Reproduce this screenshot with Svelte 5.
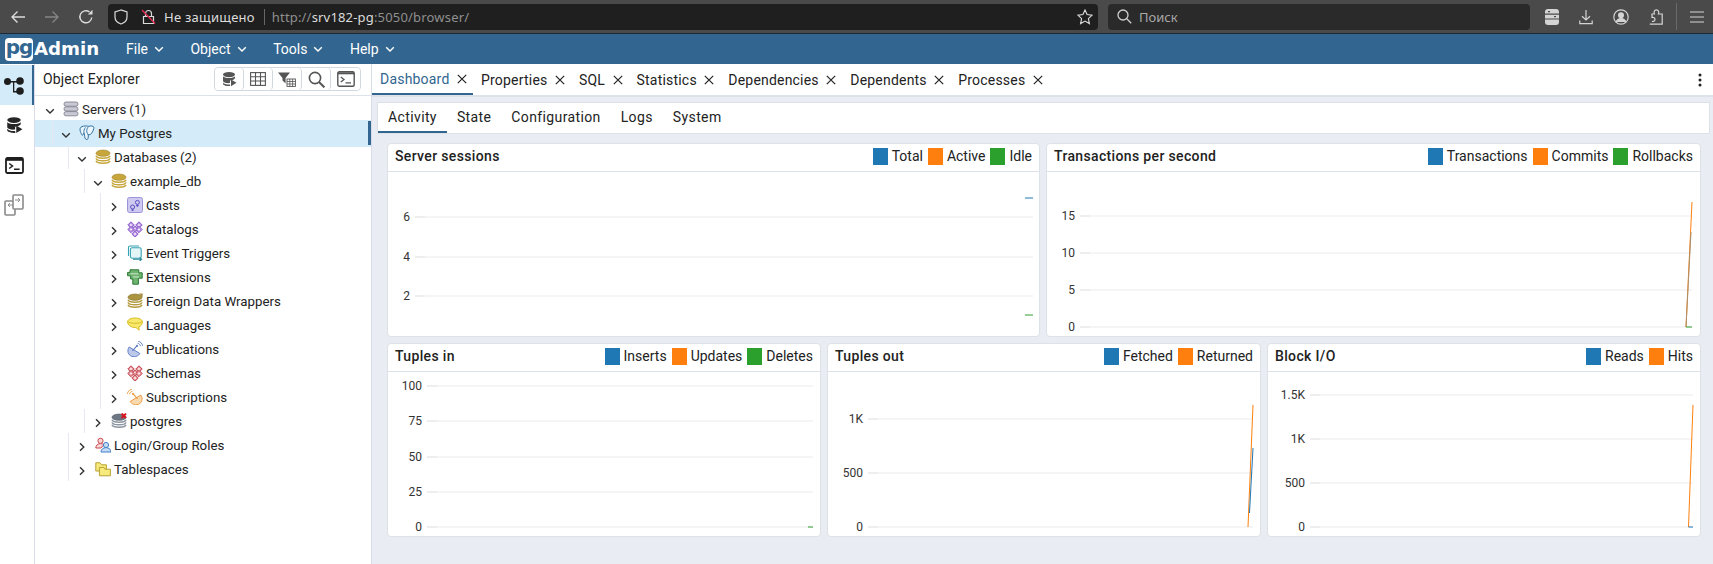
<script>
  const menus = ['File', 'Object', 'Tools', 'Help'];
  const tabs = ['Dashboard', 'Properties', 'SQL', 'Statistics', 'Dependencies', 'Dependents', 'Processes'];
  const subTabs = ['Activity', 'State', 'Configuration', 'Logs', 'System'];

  const tree = [
    { depth: 0, icon: 'servers', label: 'Servers', count: '(1)', open: true },
    { depth: 1, icon: 'elephant', label: 'My Postgres', open: true, selected: true },
    { depth: 2, icon: 'db', label: 'Databases', count: '(2)', open: true },
    { depth: 3, icon: 'db', label: 'example_db', open: true },
    { depth: 4, icon: 'casts', label: 'Casts' },
    { depth: 4, icon: 'catalogs', label: 'Catalogs' },
    { depth: 4, icon: 'triggers', label: 'Event Triggers' },
    { depth: 4, icon: 'extensions', label: 'Extensions' },
    { depth: 4, icon: 'fdw', label: 'Foreign Data Wrappers' },
    { depth: 4, icon: 'languages', label: 'Languages' },
    { depth: 4, icon: 'publications', label: 'Publications' },
    { depth: 4, icon: 'schemas', label: 'Schemas' },
    { depth: 4, icon: 'subscriptions', label: 'Subscriptions' },
    { depth: 3, icon: 'dboff', label: 'postgres' },
    { depth: 2, icon: 'roles', label: 'Login/Group Roles' },
    { depth: 2, icon: 'tablespaces', label: 'Tablespaces' }
  ];

  const BLUE = '#1f77b4';
  const ORANGE = '#ff7f0e';
  const GREEN = '#2ca02c';

  const rowOne = [
    {
      title: 'Server sessions',
      legend: [['Total', BLUE], ['Active', ORANGE], ['Idle', GREEN]],
      ticks: [['6', 45], ['4', 85], ['2', 124]],
      left: 27, right: 645,
      lines: [
        { color: BLUE, d: 'M637 26H645' },
        { color: GREEN, d: 'M637 143H645' }
      ]
    },
    {
      title: 'Transactions per second',
      legend: [['Transactions', BLUE], ['Commits', ORANGE], ['Rollbacks', GREEN]],
      ticks: [['15', 44], ['10', 81], ['5', 118], ['0', 155]],
      left: 33, right: 645,
      lines: [
        { color: ORANGE, d: 'M639 155L645 30' },
        { color: '#a8906e', d: 'M639 155L644 60' },
        { color: GREEN, d: 'M639 155H645' }
      ]
    }
  ];

  const rowTwo = [
    {
      title: 'Tuples in',
      legend: [['Inserts', BLUE], ['Updates', ORANGE], ['Deletes', GREEN]],
      ticks: [['100', 14], ['75', 49], ['50', 85], ['25', 120], ['0', 155]],
      left: 39, right: 425,
      lines: [{ color: GREEN, d: 'M420 155H425' }]
    },
    {
      title: 'Tuples out',
      legend: [['Fetched', BLUE], ['Returned', ORANGE]],
      ticks: [['1K', 47], ['500', 101], ['0', 155]],
      left: 40, right: 425,
      lines: [
        { color: ORANGE, d: 'M420 155L425 33' },
        { color: BLUE, d: 'M421.500 141L425 76' }
      ]
    },
    {
      title: 'Block I/O',
      legend: [['Reads', BLUE], ['Hits', ORANGE]],
      ticks: [['1.5K', 23], ['1K', 67], ['500', 111], ['0', 155]],
      left: 42, right: 425,
      lines: [
        { color: ORANGE, d: 'M420.5 155L425 33' },
        { color: BLUE, d: 'M420.5 155H425' }
      ]
    }
  ];
</script>

{#snippet chevron(open, cls)}
  <svg class={cls} width="12" height="12" viewBox="0 0 12 12" fill="none" stroke="currentColor" stroke-width="1.4">
    {#if open}
      <path d="M2.2 4.2 6 8l3.8-3.8" />
    {:else}
      <path d="M4 2.2 7.8 6 4 9.8" />
    {/if}
  </svg>
{/snippet}

{#snippet closeIcon()}
  <svg class="tab-x" width="10" height="10" viewBox="0 0 10 10" stroke="#222" stroke-width="1.2"><path d="M.8.8l8.4 8.4M9.2.8.8 9.2" /></svg>
{/snippet}

{#snippet dbStack(top, band, line)}
  <ellipse cx="8" cy="4.2" rx="7" ry="3.1" fill={top} stroke={line} stroke-width=".7" />
  <path d="M1 6.800c1 3.200 13 3.200 14 0M1 9.400c1 3.200 13 3.200 14 0M1 11.800c1 3.200 13 3.200 14 0" fill="none" stroke={band} stroke-width="1.500" />
{/snippet}

{#snippet lattice(fill, line)}
  {#each [[4, 4], [12, 4], [8, 8], [4, 8.5], [12, 8.5], [8, 13]] as [x, y]}
    <path d="M{x} {y - 3.2}l3.2 3.2-3.2 3.2-3.2-3.2z" fill={fill} stroke={line} stroke-width="1" />
    <rect x={x - 0.8} y={y - 0.8} width="1.6" height="1.6" fill="#fff" />
  {/each}
{/snippet}

{#snippet dish(fill, line, flip)}
  <g transform={flip ? 'translate(16 0) scale(-1 1)' : ''}>
    <path d="M2.200 6c-2.600 3.800-1 8 2.400 9.300 3.600 1.200 7-.4 8.200-2.800z" fill={fill} stroke={line} stroke-width="1" />
    <path d="M5.500 9.800 9.600 5.200" stroke={line} stroke-width="1.100" />
    <circle cx="10" cy="4.900" r="1.100" fill={line} />
    <path d="M10.600 2.300c1.400.2 2.600 1.300 2.900 2.900M11.200.4c2.300.2 4.100 2 4.400 4.500" fill="none" stroke={line} stroke-width=".9" />
  </g>
{/snippet}

{#snippet treeIcon(name)}
  <svg class="node-icon" width="16" height="16" viewBox="0 0 16 16">
    {#if name === 'servers'}
      {#each [1, 5.8, 10.6] as y}
        <rect x="1" {y} width="14" height="4.200" rx="2" fill="#c9c9d6" stroke="#84848f" stroke-width=".9" />
      {/each}
    {:else if name === 'elephant'}
      <path d="M3 1.600C1 2.200.6 4.600 1.400 6.600c.6 1.600 1.200 3 1.600 3.400.8.6 1.400-.8 2-2 .4.8.6 3.200 1 5 .4 1.400 1.600 2 2.600 1.200.8-.8.6-3 .8-4.600 1 .2 2.200 0 3-1 1.400-1.800 2.800-5 2.400-6.400C14.400 .8 11.600 .6 9.800 1.400 8.200 .8 4.600 .8 3 1.600z" fill="#eaf5fc" stroke="#2f6f9f" stroke-width="1" />
      <path d="M9.800 1.400c-1.400 1-2.400 3.400-2 5.600.2 1.400 1.400 1.800 1.400 3.200M5 8c-.4-2 .2-4 1.400-5.600" fill="none" stroke="#2f6f9f" stroke-width=".9" />
    {:else if name === 'db'}
      {@render dbStack('#c7a63c', '#c7a63c', '#a98c30')}
    {:else if name === 'fdw'}
      {@render dbStack('#ac9540', '#b59c42', '#8d7a30')}
      <path d="M12 .4h3.600V4z" fill="#a8893a" />
    {:else if name === 'dboff'}
      {@render dbStack('#6e7784', '#8c95a0', '#5a626d')}
      <path d="M10.600 .6l4.400 4.400M15 .6l-4.400 4.400" stroke="#d8161e" stroke-width="2" />
    {:else if name === 'casts'}
      <rect x=".5" y=".5" width="15" height="15" rx="2" fill="#cdc9f1" stroke="#9a93d8" stroke-width="1" />
      <circle cx="10.400" cy="5.400" r="2" fill="none" stroke="#5a4fc0" stroke-width="1" />
      <circle cx="5.600" cy="10" r="2" fill="none" stroke="#5a4fc0" stroke-width="1" />
      <path d="M10.400 7.400v2.600M5.600 12v2M9 8.600h2.800M4.400 13h2.400" stroke="#5a4fc0" stroke-width=".9" />
    {:else if name === 'catalogs'}
      {@render lattice('#b893e4', '#8e5fcb')}
    {:else if name === 'schemas'}
      {@render lattice('#e69aa0', '#c2444f')}
    {:else if name === 'triggers'}
      <path d="M1.500 11V2.800C1.500 1.600 2 1 3.200 1H12" fill="none" stroke="#37a3b4" stroke-width="1.100" />
      <rect x="3.400" y="2.800" width="10.800" height="10.400" rx="1.600" fill="#e3f5f7" stroke="#37a3b4" stroke-width="1.100" />
      <path d="M6 14.200h8.400M12.600 12.400l2 1.800-2 1.800" fill="none" stroke="#2d8797" stroke-width="1.100" />
    {:else if name === 'extensions'}
      <path d="M3 .8h8.800v3h3.400v5.400H11.400v6H5.800V10H3.600V6.800H.6V3.400H3z" fill="#6eb36f" stroke="#2c7a35" stroke-width="1" />
      <path d="M3.400 4.800h8M6 8h6" stroke="#cfe8cf" stroke-width="1" />
    {:else if name === 'languages'}
      <path d="M.6 5c0-2.600 3.400-4 7.400-4s7.400 1.400 7.400 4c0 2.400-1.600 4.200-3.600 4.800l.4 3.400-3.200-2.600C4 10.800.6 7.800.6 5z" fill="#f7e96b" stroke="#d9bd2a" stroke-width="1" />
      <path d="M1 4.800c2.400 2 11.400 2 14 0" fill="none" stroke="#d9bd2a" stroke-width="1" />
    {:else if name === 'publications'}
      {@render dish('#bcc9ea', '#5f7cc4', false)}
    {:else if name === 'subscriptions'}
      {@render dish('#fbd9ae', '#ee9a3e', true)}
    {:else if name === 'roles'}
      <circle cx="5.500" cy="3.800" r="2.600" fill="#f8d7d8" stroke="#c9474f" stroke-width="1" />
      <path d="M.8 11c0-2.600 2-4.400 4.700-4.400 1.400 0 2.400.4 3.200 1.200L6 11z" fill="#f8d7d8" stroke="#c9474f" stroke-width="1" />
      <circle cx="11" cy="8" r="2.600" fill="#c6dcf5" stroke="#3f7fc7" stroke-width="1" />
      <path d="M6 15c0-2.600 2.200-4.400 5-4.400s5 1.800 5 4.400z" fill="#c6dcf5" stroke="#3f7fc7" stroke-width="1" />
    {:else if name === 'tablespaces'}
      <path d="M.8 1.800V10h10.600V3.800H6.600L5 1.800z" fill="#f6ea7d" stroke="#b9a232" stroke-width="1" />
      <path d="M4.400 6.400v8.400h11V8.200H10L8.800 6.400z" fill="#f6ea7d" stroke="#b9a232" stroke-width="1" />
    {/if}
  </svg>
{/snippet}

{#snippet toolDb(color)}
  <ellipse cx="8" cy="3.600" rx="6" ry="2.600" fill={color} />
  <path d="M2 5.300c1 2.400 11 2.400 12 0v2c-1 1.600-3 2-5 2.200v2.600c-3 .4-6-.2-7-1.800zM2 11.400c1 1.500 4 2.200 7 2l.2 1.600c-3 .2-6-.4-7.200-1.800z" fill={color} />
  <path d="M10 8.400l5.500 3.400L10 15.200z" fill={color} />
{/snippet}

{#snippet chart(c)}
  <section class="card">
    <header class="card-head">
      <h3>{c.title}</h3>
      <ul class="legend">
        {#each c.legend as [name, color]}
          <li><i style="background:{color}"></i>{name}</li>
        {/each}
      </ul>
    </header>
    <svg class="plot" width="100%" height="164">
      {#each c.ticks as [label, y]}
        <path class="tick" d="M{c.left} {y}h10" />
        <path class="grid" d="M{c.left + 10} {y}H{c.right}" />
        <text x={c.left - 5} y={y + 4} text-anchor="end">{label}</text>
      {/each}
      {#each c.lines as l}
        <path d={l.d} fill="none" stroke={l.color} stroke-width="1" />
      {/each}
    </svg>
  </section>
{/snippet}

<div class="app">
  <div class="browser">
    <svg class="nav-btn" width="16" height="16" viewBox="0 0 16 16" fill="none" stroke="#dcdcdc" stroke-width="1.4"><path d="M15 8H2M7.500 2.500 2 8l5.500 5.500" /></svg>
    <svg class="nav-btn" width="16" height="16" viewBox="0 0 16 16" fill="none" stroke="#858585" stroke-width="1.4"><path d="M1 8h13M8.500 2.500 14 8l-5.500 5.500" /></svg>
    <svg class="nav-btn" width="16" height="16" viewBox="0 0 16 16" fill="none" stroke="#dcdcdc" stroke-width="1.400"><path d="M13.800 8.500A6 6 0 1 1 11.500 3" /><path d="M14.500 .8v4.700H9.800z" fill="#dcdcdc" stroke="none" /></svg>

    <div class="urlbar">
      <svg width="14" height="16" viewBox="0 0 14 16" fill="none" stroke="#dcdcdc" stroke-width="1.200"><path d="M7 1 1 3v5c0 3.500 3 6 6 7 3-1 6-3.500 6-7V3z" /></svg>
      <svg class="lock" width="15" height="16" viewBox="0 0 15 16" fill="none"><path d="M4.500 7V4.500a3 3 0 0 1 6 0V7M2.500 7.500h10v7h-10z" stroke="#dcdcdc" stroke-width="1.200" /><path d="M1 1l13 13.500" stroke="#e22850" stroke-width="1.400" /></svg>
      <span class="insecure">Не защищено</span>
      <span class="sep"></span>
      <span class="url">http://<b>srv182-pg</b>:5050/browser/</span>
      <svg class="star" width="16" height="16" viewBox="0 0 16 16" fill="none" stroke="#dcdcdc" stroke-width="1.100"><path d="M8 1l2.100 4.600 5 .6-3.700 3.400 1 5L8 12.100l-4.400 2.500 1-5L.9 6.200l5-.6z" /></svg>
    </div>

    <div class="search">
      <svg width="15" height="15" viewBox="0 0 15 15" fill="none" stroke="#cfcfcf" stroke-width="1.300"><circle cx="6" cy="6" r="5" /><path d="M9.800 9.800 14.200 14.200" /></svg>
      <span>Поиск</span>
    </div>

    <div class="browser-tools">
      <svg width="14" height="16" viewBox="0 0 14 16"><rect width="14" height="16" rx="3" fill="#d4d4d4" /><path d="M0 5.200h14M0 10h14" stroke="#4a4a4a" stroke-width="1.200" /><path d="M3 2.600h2M9 7.600h2" stroke="#4a4a4a" stroke-width="1.400" /></svg>
      <svg width="14" height="16" viewBox="0 0 14 16" fill="none" stroke="#d4d4d4" stroke-width="1.200"><path d="M7 1v10M3 7.200 7 11l4-3.800M.8 11.500v3.200h12.400v-3.200" /></svg>
      <svg width="16" height="16" viewBox="0 0 16 16" fill="none" stroke="#d4d4d4" stroke-width="1.200"><circle cx="8" cy="8" r="7.200" /><circle cx="8" cy="6.200" r="2.400" fill="#d4d4d4" /><path d="M3.200 13c.8-2.400 2.600-3.400 4.800-3.400s4 1 4.800 3.400" fill="#d4d4d4" /></svg>
      <svg width="14" height="16" viewBox="0 0 14 16" fill="none" stroke="#d4d4d4" stroke-width="1.200"><path d="M.8 15.200h12.400V5H9.400c.8-1.600.2-4.200-2-4.200S4.600 3.400 5.400 5H3v3.400c1.800-.4 3 .6 3 2s-1.400 2.400-3 2" /></svg>
      <span class="tool-sep"></span>
      <svg width="14" height="12" viewBox="0 0 14 12" stroke="#d4d4d4" stroke-width="1.200"><path d="M0 1h14M0 6h14M0 11h14" /></svg>
    </div>
  </div>

  <nav class="menubar">
    <div class="logo"><span class="pg">pg</span><span class="admin">Admin</span></div>
    {#each menus as m}
      <span class="menu">{m}{@render chevron(true, 'menu-chev')}</span>
    {/each}
  </nav>

  <main class="main">
    <aside class="rail">
      <div class="rail-btn active">
        <svg width="20" height="19" viewBox="0 0 20 19" fill="#1e1e1e"><circle cx="3.500" cy="5.500" r="3.500" /><circle cx="16" cy="5" r="3.800" /><circle cx="16" cy="15" r="3.800" /><path d="M3 5h12v1.400H10.300V15H15v1.400H9V6.400H3z" /></svg>
      </div>
      <div class="rail-btn">
        <svg width="18" height="18" viewBox="0 0 16 16">{@render toolDb('#262626')}</svg>
      </div>
      <div class="rail-btn">
        <svg width="19" height="17" viewBox="0 0 19 17" fill="none"><rect x="1" y="1" width="17" height="15" rx="1.500" stroke="#1e1e1e" stroke-width="1.800" /><path d="M1 2.500h17" stroke="#1e1e1e" stroke-width="2.600" /><path d="M4.200 6.500 7.500 9l-3.300 2.500M9 12.300h5.600" stroke="#1e1e1e" stroke-width="1.500" /></svg>
      </div>
      <div class="rail-btn">
        <svg width="20" height="22" viewBox="0 0 20 22" fill="#fff" stroke="#8a8a8a" stroke-width="1.600"><rect x="1" y="7" width="10" height="14" rx="1" /><rect x="9" y="1" width="10" height="14" rx="1" /><path d="M9 11H4.500M6 9l-2 2 2 2M11 6h5M14 4l2 2-2 2" stroke-width="1" fill="none" /></svg>
      </div>
    </aside>

    <section class="explorer">
      <header class="explorer-head">
        <span>Object Explorer</span>
        <div class="toolbar">
          <button aria-label="Query tool">
            <svg width="16" height="16" viewBox="0 0 16 16">{@render toolDb('#555')}</svg>
          </button>
          <button aria-label="View data">
            <svg width="16" height="14" viewBox="0 0 16 14" fill="none" stroke="#555" stroke-width="1.100"><rect x=".6" y=".6" width="14.800" height="12.800" /><path d="M.6 4.800h14.800M.6 9h14.800M5.500.6v12.800M10.500.6v12.800" /></svg>
          </button>
          <button aria-label="Filtered rows">
            <svg width="18" height="15" viewBox="0 0 18 15"><path d="M0 .5h12L7.600 6v5.500L4.500 8.500V6z" fill="#555" /><rect x="9" y="7" width="8.400" height="7.400" fill="#fff" stroke="#555" stroke-width=".9" /><path d="M9 9.500h8.400M9 12h8.400M11.800 7v7.400M14.600 7v7.400" stroke="#555" stroke-width=".8" /></svg>
          </button>
          <button aria-label="Search">
            <svg width="17" height="17" viewBox="0 0 17 17" fill="none" stroke="#555" stroke-width="1.600"><circle cx="7" cy="7" r="5.600" /><path d="M11 11l5.400 5.400" stroke-width="2" /></svg>
          </button>
          <button aria-label="PSQL">
            <svg width="18" height="16" viewBox="0 0 18 16" fill="none" stroke="#555"><rect x=".8" y=".8" width="16.400" height="14.400" rx="1.500" stroke-width="1.400" /><path d="M.8 2.300h16.400" stroke-width="2" /><path d="M3.800 6 7 8.500 3.800 11M8.500 11.800h5.500" stroke-width="1.300" /></svg>
          </button>
        </div>
      </header>

      <div class="tree">
        {#each tree as n}
          <div class="row" class:selected={n.selected}>
            <span class="guide" class:hidden={n.depth === 0} style="width:{16 * n.depth}px"></span>
            <span class="twisty">{@render chevron(n.open, '')}</span>
            {@render treeIcon(n.icon)}
            <span class="label">{n.label}{#if n.count}<span class="count">{n.count}</span>{/if}</span>
          </div>
        {/each}
      </div>
    </section>

    <section class="dash">
      <div class="tabbar">
        {#each tabs as t, i}
          <div class="tab" class:on={i === 0}>{t}{@render closeIcon()}</div>
        {/each}
        <svg class="more" width="4" height="14" viewBox="0 0 4 14" fill="#222"><circle cx="2" cy="2" r="1.500" /><circle cx="2" cy="7" r="1.500" /><circle cx="2" cy="12" r="1.500" /></svg>
      </div>

      <div class="dash-body">
        <div class="subtabs">
          {#each subTabs as t, i}
            <div class="subtab" class:on={i === 0}>{t}</div>
          {/each}
        </div>
        <div class="charts">
          <div class="chart-row two">
            {#each rowOne as c}{@render chart(c)}{/each}
          </div>
          <div class="chart-row three">
            {#each rowTwo as c}{@render chart(c)}{/each}
          </div>
        </div>
      </div>
    </section>
  </main>
</div>

<style>
  :global(body) {
    margin: 0;
    background: #fff;
  }

  .app {
    width: 1713px;
    height: 564px;
    overflow: hidden;
    display: flex;
    flex-direction: column;
    font-family: Roboto, "Liberation Sans", sans-serif;
    font-size: 14px;
    color: #222;
  }

  /* browser chrome */
  .browser {
    height: 33px;
    flex: none;
    display: flex;
    align-items: center;
    padding-left: 10px;
    background: #4a4a4a;
    border-bottom: 1px solid #1d2a36;
    font-family: "Noto Sans", sans-serif;
    font-size: 13px;
    color: #dcdcdc;
  }

  .nav-btn {
    margin-right: 18px;
    flex: none;
  }

  .urlbar {
    margin-left: -4px;
    width: 990px;
    height: 26px;
    flex: none;
    box-sizing: border-box;
    display: flex;
    align-items: center;
    padding: 0 5px 0 6px;
    background: #1f1f1f;
    border-radius: 4px;
  }

  .lock {
    margin-left: 13px;
  }

  .insecure {
    margin-left: 8px;
    letter-spacing: 0.25px;
  }

  .sep {
    width: 1px;
    height: 16px;
    margin: 0 7px 0 9px;
    background: #666;
  }

  .url {
    color: #8f8f8f;
    letter-spacing: 0.18px;
  }

  .url b {
    font-weight: 400;
    color: #dcdcdc;
  }

  .star {
    margin-left: auto;
  }

  .search {
    margin-left: 10px;
    width: 422px;
    height: 26px;
    flex: none;
    box-sizing: border-box;
    display: flex;
    align-items: center;
    gap: 7px;
    padding-left: 9px;
    background: #2a2a2a;
    border-radius: 4px;
    color: #a8a8a8;
  }

  .browser-tools {
    margin-left: 15px;
    display: flex;
    align-items: center;
    gap: 20px;
  }

  .tool-sep {
    width: 1px;
    height: 27px;
    margin: 0 -7px 0 -7px;
    background: #6a6a6a;
  }

  /* pgAdmin menu */
  .menubar {
    height: 30px;
    flex: none;
    display: flex;
    align-items: center;
    background: #326690;
    color: #fff;
  }

  .logo {
    width: 126px;
    flex: none;
    display: flex;
    align-items: center;
    padding-left: 5px;
    box-sizing: border-box;
  }

  .pg {
    width: 28px;
    height: 23px;
    box-sizing: border-box;
    text-align: center;
    background: #fff;
    border-radius: 4px;
    color: #326690;
    font: 800 20px/18px "DejaVu Sans", sans-serif;
    letter-spacing: -1px;
  }

  .admin {
    margin-left: 1px;
    font: 700 18.2px/1 "DejaVu Sans", sans-serif;
  }

  .menu {
    display: flex;
    align-items: center;
    gap: 5px;
    margin-right: 25.5px;
  }

  /* left rail */
  .main {
    flex: 1;
    min-height: 0;
    display: flex;
  }

  .rail {
    width: 35px;
    flex: none;
    box-sizing: border-box;
    border-right: 1px solid #d8dce8;
    background: #fff;
  }

  .rail-btn {
    height: 40px;
    display: flex;
    align-items: center;
    justify-content: center;
    padding-right: 6px;
    box-sizing: border-box;
    width: 34px;
  }

  .rail-btn.active {
    margin-top: 1px;
    background: #d4ecfa;
    border-right: 2px solid #326690;
    padding-right: 4px;
  }

  /* object explorer */
  .explorer {
    width: 337px;
    flex: none;
    box-sizing: border-box;
    border-right: 1px solid #d8dce8;
    display: flex;
    flex-direction: column;
  }

  .explorer-head {
    height: 32px;
    flex: none;
    box-sizing: border-box;
    display: flex;
    align-items: center;
    justify-content: space-between;
    padding: 0 10px 1px 8px;
    border-bottom: 1px solid #dde1e8;
    letter-spacing: 0.15px;
  }

  .toolbar {
    display: flex;
    height: 24px;
    box-sizing: border-box;
    border: 1px solid #d3d8e0;
    border-radius: 4px;
  }

  .toolbar button {
    width: 29px;
    padding: 0;
    display: flex;
    align-items: center;
    justify-content: center;
    background: #fff;
    border: 0;
    border-right: 1px solid #d3d8e0;
    border-radius: 4px;
  }

  .toolbar button:last-child {
    border-right: 0;
  }

  .tree {
    padding-top: 1px;
    font-size: 13.3px;
  }

  .row {
    height: 24px;
    display: flex;
    align-items: center;
  }

  .row.selected {
    background: #d4ecfa;
    box-shadow: 0 -1px 0 #d4ecfa, 0 2px 0 #d4ecfa;
    border-right: 3px solid #326690;
  }

  .guide {
    height: 24px;
    flex: none;
    margin-left: 1px;
    border-right: 1px solid #e7e9ef;
  }

  .guide.hidden {
    border-right-color: transparent;
  }

  .twisty {
    width: 26px;
    flex: none;
    display: flex;
    justify-content: center;
    padding-top: 3px;
    color: #333;
  }

  .node-icon {
    flex: none;
    margin-right: 3px;
  }

  .count {
    margin-left: 3px;
  }

  /* dashboard */
  .dash {
    flex: 1;
    min-width: 0;
    display: flex;
    flex-direction: column;
  }

  .tabbar {
    height: 33px;
    flex: none;
    box-sizing: border-box;
    display: flex;
    border-bottom: 2px solid #dde1e8;
    letter-spacing: 0.2px;
  }

  .tab {
    height: 31px;
    box-sizing: border-box;
    display: flex;
    align-items: center;
    gap: 7.5px;
    padding: 0 6px 0 8px;
  }

  .tab.on {
    color: #326690;
    border-bottom: 2px solid #326690;
  }

  .more {
    margin: 9px 11px 0 auto;
  }

  .dash-body {
    flex: 1;
    display: flex;
    flex-direction: column;
    padding: 5px 3px 0 5px;
    background: #e9ecf2;
  }

  .subtabs {
    height: 32px;
    flex: none;
    box-sizing: border-box;
    display: flex;
    background: #fff;
    border: 1px solid #dde1e8;
    letter-spacing: 0.38px;
  }

  .subtab {
    height: 30px;
    box-sizing: border-box;
    padding: 0 10px 2px;
    display: flex;
    align-items: center;
  }

  .subtab.on {
    border-bottom: 2px solid #326690;
    padding-bottom: 0;
  }

  .charts {
    display: flex;
    flex-direction: column;
    gap: 6px;
    padding: 9px 9px 0 10px;
  }

  .chart-row {
    display: grid;
    gap: 6px;
    height: 194px;
  }

  .two {
    grid-template-columns: 653px 1fr;
  }

  .three {
    grid-template-columns: repeat(3, 1fr);
  }

  .card {
    display: flex;
    flex-direction: column;
    min-width: 0;
    box-sizing: border-box;
    background: #fff;
    border: 1px solid #dde1e8;
    border-radius: 4px;
  }

  .card-head {
    height: 28px;
    flex: none;
    box-sizing: border-box;
    display: flex;
    align-items: center;
    justify-content: space-between;
    padding: 0 7px 4px 7px;
    border-bottom: 1px solid #dde1e8;
  }

  h3 {
    margin: 0;
    font-size: 14px;
    font-weight: 500;
    letter-spacing: 0.35px;
  }

  .legend {
    display: flex;
    gap: 5px;
    margin: 0;
    padding: 0;
    list-style: none;
  }

  .legend li {
    display: flex;
    align-items: center;
    gap: 4px;
  }

  .legend i {
    width: 15px;
    height: 17px;
    margin-top: 2px;
  }

  .plot {
    display: block;
  }

  .plot text {
    font-size: 12px;
    fill: #333;
  }

  .tick {
    stroke: #e8e8e8;
    stroke-width: 1.500;
  }

  .grid {
    stroke: #f2f2f2;
    stroke-width: 1.500;
  }
</style>
